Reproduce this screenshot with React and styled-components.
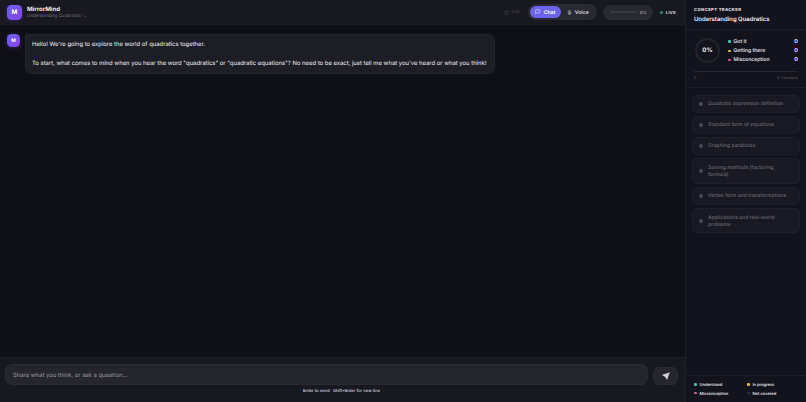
import React from 'react'
import styled, { createGlobalStyle } from 'styled-components'

const GlobalStyle = createGlobalStyle`
    * {
        box-sizing: border-box;
    }

    body {
        margin: 0;
        background: #0f0f17;
        color: #f0f0f5;
        font-family: Inter, 'Liberation Sans', sans-serif;
        text-rendering: geometricPrecision;
        overflow: hidden;
    }
`

const Page = styled.div`
    display: grid;
    grid-template-columns: 685px 121px;
    width: 806px;
    height: 402px;
    white-space: nowrap;
`

const Main = styled.main`
    display: grid;
    grid-template-rows: 25px 1fr 45px;
    min-width: 0;
    height: 402px;
`

const Header = styled.header`
    display: flex;
    align-items: center;
    padding: 0 9px 0 7px;
    background: #181820;
    border-bottom: 1px solid #1c1c25;
`

const Avatar = styled.div`
    display: flex;
    flex: none;
    align-items: center;
    justify-content: center;
    width: ${props => props.$size}px;
    height: ${props => props.$size}px;
    border-radius: ${props => props.$radius}px;
    background: linear-gradient(135deg, #6a62ee, #8842ea);
    box-shadow: 0 1px 4px rgba(112, 80, 240, 0.3);
    color: #fff;
    font-size: ${props => props.$font}px;
    font-weight: 700;
`

const Brand = styled.div`
    flex: 1;
    margin-left: 5px;
    padding-top: 2px;
`

const BrandName = styled.div`
    font-size: 6px;
    font-weight: 700;
    line-height: 7.5px;
`

const BrandTopic = styled.div`
    color: #707079;
    font-size: 4.35px;
    line-height: 6px;
`

const Timer = styled.div`
    display: flex;
    align-items: center;
    gap: 2px;
    margin-right: 7px;
    color: #4c4c55;
    font-size: 4.2px;
    font-weight: 500;
    letter-spacing: 0.1px;
`

const Modes = styled.div`
    display: flex;
    align-items: center;
    width: 69px;
    height: 16px;
    padding: 2px;
    border-radius: 8px;
    background: #292931;
`

const Mode = styled.div`
    display: flex;
    align-items: center;
    justify-content: center;
    gap: 3px;
    width: ${props => (props.$active ? 31 : 34)}px;
    height: 12px;
    border-radius: 6px;
    background: ${props => (props.$active ? '#6c63ec' : 'transparent')};
    color: ${props => (props.$active ? '#fff' : '#dcdce2')};
    font-size: 5.2px;
    font-weight: 600;

    span {
        padding-top: 1px;
    }
`

const Meter = styled.div`
    display: flex;
    align-items: center;
    justify-content: space-between;
    width: 50px;
    height: 15px;
    margin-left: 6px;
    padding: 0 6px 0 7px;
    border-radius: 8px;
    background: #292931;
    color: #a0a0a8;
    font-size: 4.1px;
    font-weight: 600;
`

const MeterTrack = styled.div`
    width: 27px;
    height: 2px;
    border-radius: 1px;
    background: #383841;
`

const Live = styled.div`
    display: flex;
    align-items: center;
    gap: 3px;
    margin-left: 7px;
    color: #d9d9df;
    font-size: 4.1px;
    font-weight: 700;
    letter-spacing: 0.3px;
`

const Dot = styled.span`
    flex: none;
    width: ${props => props.$size}px;
    height: ${props => props.$size}px;
    border-radius: 50%;
    background: ${props => props.$color};
`

const Chat = styled.section`
    display: flex;
    align-items: flex-start;
    gap: 5px;
    padding: 9px 7px;
    background: #0f0f17;
`

const Bubble = styled.div`
    width: 469.5px;
    height: 39.5px;
    padding: 5px 6px;
    border: 1px solid #23232c;
    border-radius: 2px 7px 7px 7px;
    background: #1d1d26;
    font-size: 5.9px;
    line-height: 9.7px;
    white-space: pre;
`

const Composer = styled.footer`
    padding: 6px 7px 0 5px;
    border-top: 1px solid #20202a;
    background: #181820;
`

const ComposerRow = styled.div`
    display: flex;
    align-items: flex-end;
    gap: 5px;
`

const Input = styled.div`
    display: flex;
    flex: 1;
    align-items: center;
    height: 21px;
    padding: 1px 0 0 7px;
    border: 1px solid #2a2a33;
    border-radius: 7px;
    background: #25252e;
    color: #9a9aa4;
    font-size: 5.9px;
`

const SendButton = styled.div`
    display: flex;
    align-items: center;
    justify-content: center;
    width: 25px;
    height: 18px;
    border: 1px solid #2a2a33;
    border-radius: 6px;
    background: #25252e;
`

const Hint = styled.div`
    margin-top: 4px;
    color: #dedee4;
    font-size: 4.2px;
    font-weight: 500;
    line-height: 6px;
    text-align: center;
`

const Sidebar = styled.aside`
    display: flex;
    flex-direction: column;
    height: 402px;
    border-left: 1px solid #20202a;
    background: #13131d;
`

const TrackerHead = styled.div`
    height: 30px;
    padding: 8px 8px 0;
    border-bottom: 1px solid #1c1c26;
`

const Overline = styled.div`
    font-size: 4.2px;
    font-weight: 700;
    letter-spacing: 0.38px;
    line-height: 6px;
`

const TrackerTitle = styled.div`
    margin-top: 2px;
    font-size: 5.95px;
    font-weight: 600;
    line-height: 8px;
`

const Progress = styled.div`
    height: 58px;
    padding: 7px 8px 0 8px;
    border-bottom: 1px solid #1c1c26;
`

const ProgressTop = styled.div`
    display: flex;
    align-items: center;
    gap: 8px;
    padding-left: 1px;
`

const Ring = styled.div`
    display: flex;
    align-items: center;
    justify-content: center;
    width: 25px;
    height: 25px;
    border: 2px solid #23232d;
    border-radius: 50%;
    font-size: 6.1px;
    font-weight: 700;
`

const Counts = styled.div`
    flex: 1;
`

const Count = styled.div`
    display: flex;
    align-items: center;
    gap: 3px;
    height: 9.3px;
    font-size: 5.1px;
    font-weight: 500;

    b {
        margin-left: auto;
        font-size: 5.4px;
    }
`

const Track = styled.div`
    height: 1px;
    margin-top: 6px;
    background: #262630;
`

const TrackLabels = styled.div`
    display: flex;
    justify-content: space-between;
    margin-top: 3px;
    color: #5e5e68;
    font-size: 3.7px;
    line-height: 5px;
    letter-spacing: 0.12px;
`

const Concepts = styled.div`
    display: flex;
    flex: 1;
    flex-direction: column;
    gap: 3px;
    padding: 6.5px 6px 0 6px;
`

const Concept = styled.div`
    display: flex;
    align-items: center;
    gap: 5px;
    height: ${props => (props.$tall ? 25.4 : 18.3)}px;
    padding-left: 6px;
    border: 1px solid #1f1f29;
    border-radius: 5px;
    background: #191923;
    color: #686872;
    font-size: 5.05px;
    font-weight: 500;
    line-height: 7px;
    white-space: pre;

    span + span {
        padding-top: 1.5px;
    }
`

const Legend = styled.div`
    display: grid;
    grid-template-columns: 53px 1fr;
    grid-auto-rows: 8.5px;
    height: 27px;
    padding: 4px 8px 0;
    border-top: 1px solid #1e1e28;
`

const LegendItem = styled.div`
    display: flex;
    align-items: center;
    gap: 3px;
    font-size: 4.05px;
    font-weight: 500;

    span + span {
        padding-top: 1px;
    }
`

const counts = [
    ['Got it', '#42c9ae'],
    ['Getting there', '#edc044'],
    ['Misconception', '#e9628f'],
]

const concepts = [
    'Quadratic expression definition',
    'Standard form of equations',
    'Graphing parabolas',
    'Solving methods (factoring,\nformula)',
    'Vertex form and transformations',
    'Applications and real-world\nproblems',
]

const legend = [
    ['Understood', '#42c9ae'],
    ['In progress', '#edc044'],
    ['Misconception', '#e9628f'],
    ['Not covered', '#34343e'],
]

const ClockIcon = () => (
    <svg width="5" height="5" viewBox="0 0 24 24" fill="none" stroke="currentColor" strokeWidth="2.5">
        <circle cx="12" cy="12" r="10" />
        <path d="M12 6v6l4 2" />
    </svg>
)

const ChatIcon = () => (
    <svg width="5.5" height="5.5" viewBox="0 0 24 24" fill="none" stroke="currentColor" strokeWidth="2.2" strokeLinejoin="round">
        <path d="M21 15a2 2 0 0 1-2 2H7l-4 4V5a2 2 0 0 1 2-2h14a2 2 0 0 1 2 2z" />
    </svg>
)

const MicIcon = () => (
    <svg width="5" height="5" viewBox="0 0 24 24" fill="none" stroke="currentColor" strokeWidth="2.5">
        <path d="M12 1a3 3 0 0 0-3 3v8a3 3 0 0 0 6 0V4a3 3 0 0 0-3-3zM19 10v2a7 7 0 0 1-14 0v-2M12 19v4M8 23h8" />
    </svg>
)

const SendIcon = () => (
    <svg width="8" height="8" viewBox="0 0 24 24" fill="#d8d8df" stroke="#d8d8df" strokeWidth="1.5" strokeLinejoin="round">
        <path d="M22 2L1.5 9.3L10 14z" />
        <path d="M22 2L14.7 22.5L10 14z" />
    </svg>
)

const App = () => (
    <React.Fragment>
        <GlobalStyle />
        <Page>
            <Main>
                <Header>
                    <Avatar $size={15} $radius={4.5} $font={6.2}>M</Avatar>
                    <Brand>
                        <BrandName>MirrorMind</BrandName>
                        <BrandTopic>Understanding Quadratics ·...</BrandTopic>
                    </Brand>
                    <Timer>
                        <ClockIcon />
                        0:07
                    </Timer>
                    <Modes>
                        <Mode $active>
                            <ChatIcon />
                            <span>Chat</span>
                        </Mode>
                        <Mode>
                            <MicIcon />
                            <span>Voice</span>
                        </Mode>
                    </Modes>
                    <Meter>
                        <MeterTrack />
                        0%
                    </Meter>
                    <Live>
                        <Dot $size={3} $color="#2f8e7d" />
                        LIVE
                    </Live>
                </Header>
                <Chat>
                    <Avatar $size={13} $radius={4.5} $font={4.8}>M</Avatar>
                    <Bubble>
                        {`Hello! We're going to explore the world of quadratics together.\n\nTo start, what comes to mind when you hear the word "quadratics" or "quadratic equations"? No need to be exact, just tell me what you've heard or what you think!`}
                    </Bubble>
                </Chat>
                <Composer>
                    <ComposerRow>
                        <Input>Share what you think, or ask a question...</Input>
                        <SendButton>
                            <SendIcon />
                        </SendButton>
                    </ComposerRow>
                    <Hint>Enter to send · Shift+Enter for new line</Hint>
                </Composer>
            </Main>
            <Sidebar>
                <TrackerHead>
                    <Overline>CONCEPT TRACKER</Overline>
                    <TrackerTitle>Understanding Quadratics</TrackerTitle>
                </TrackerHead>
                <Progress>
                    <ProgressTop>
                        <Ring>0%</Ring>
                        <Counts>
                            {counts.map(([label, color]) => (
                                <Count key={label}>
                                    <Dot $size={2.5} $color={color} />
                                    {label}
                                    <b>0</b>
                                </Count>
                            ))}
                        </Counts>
                    </ProgressTop>
                    <Track />
                    <TrackLabels>
                        <span>0</span>
                        <span>6 concepts</span>
                    </TrackLabels>
                </Progress>
                <Concepts>
                    {concepts.map(name => (
                        <Concept key={name} $tall={name.includes('\n')}>
                            <Dot $size={4} $color="#484852" />
                            <span>{name}</span>
                        </Concept>
                    ))}
                </Concepts>
                <Legend>
                    {legend.map(([label, color]) => (
                        <LegendItem key={label}>
                            <Dot $size={2.5} $color={color} />
                            <span>{label}</span>
                        </LegendItem>
                    ))}
                </Legend>
            </Sidebar>
        </Page>
    </React.Fragment>
)

export default App
